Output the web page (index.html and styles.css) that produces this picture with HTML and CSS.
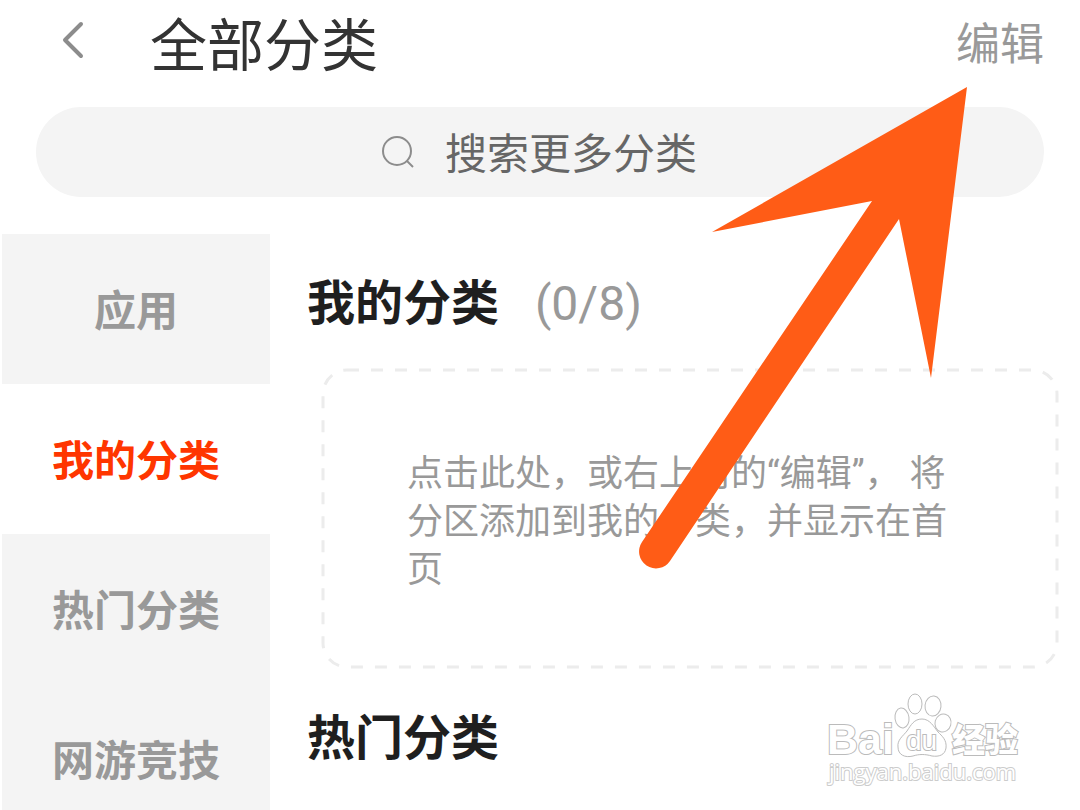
FILE: index.html
```html
<!DOCTYPE html>
<html lang="zh-CN">
<head>
  <meta charset="UTF-8" />
  <meta name="viewport" content="width=device-width, initial-scale=1.0" />
  <title>全部分类</title>
  <link rel="stylesheet" href="styles.css">
</head>
<body>
<div class="app">

  <header class="topbar">
    <button class="back" type="button" aria-label="返回">
      <svg width="24" height="40" viewBox="0 0 24 40"><path d="M21 4L5 20L21 36" /></svg>
    </button>
    <h1>全部分类</h1>
    <button class="edit" type="button">编辑</button>
  </header>

  <label class="search">
    <svg width="36" height="36" viewBox="0 0 36 36"><circle cx="16" cy="17" r="14" /><path d="M26 27L32 33" /></svg>
    <input type="text" placeholder="搜索更多分类" aria-label="搜索更多分类">
  </label>

  <div class="main">
    <nav class="sidebar">
      <a href="#app">应用</a>
      <a href="#mine" class="active">我的分类</a>
      <a href="#hot">热门分类</a>
      <a href="#games">网游竞技</a>
    </nav>

    <main class="content">
      <section id="mine">
        <h2>我的分类 <span class="count">(0/8)</span></h2>
        <div class="empty">
          <svg class="empty-border" aria-hidden="true"><rect x="2" y="2" rx="24" /></svg>
          <p>点击此处，或右上角的“编辑”， 将分区添加到我的分类，并显示在首页</p>
        </div>
      </section>
      <section id="hot">
        <h2>热门分类</h2>
      </section>
    </main>
  </div>

  <!-- arrow to the edit button -->
  <svg class="arrow" width="330" height="484" viewBox="0 0 330 484" aria-hidden="true">
    <path d="M328 1L73 146L233 115L3 456A16.6 16.6 0 0 0 31 475L260 133L292 292Z" />
  </svg>

  <svg class="watermark" width="200" height="100" viewBox="0 0 200 100" role="img" aria-label="Baidu 经验">
    <text class="wm-bai" x="3" y="62">Bai</text>
    <ellipse cx="78" cy="26" rx="7" ry="10" transform="rotate(-8 78 26)" />
    <ellipse cx="91" cy="12" rx="7" ry="10" />
    <ellipse cx="109" cy="14" rx="8" ry="10" transform="rotate(6 109 14)" />
    <ellipse cx="119" cy="31" rx="8" ry="9" transform="rotate(15 119 31)" />
    <path d="M98 27C106 27 110 35 114 40C118 44 123 48 122 56C121 63 115 65 108 64C101 62 95 62 89 64C81 66 74 63 74 55C73 48 79 44 83 39C87 33 90 27 98 27Z" />
    <text class="wm-du" x="82" y="58">du</text>
    <text class="wm-cn" x="128" y="60">经验</text>
    <text class="wm-url" x="5" y="88">jingyan.baidu.com</text>
  </svg>

</div>
</body>
</html>
```

FILE: styles.css
```css
:root { --grey-bg: #f4f4f4; --grey: #999; --dark: #1f1f1f; --red: #ff3600; --orange: #ff5c16; }
* { box-sizing: border-box; font-family: Roboto, "Noto Sans CJK SC", sans-serif; }
body { margin: 0; background: #fff; color: var(--dark); }
h1, h2, p { margin: 0; }
button { padding: 0; border: none; background: none; cursor: pointer; }
.app { position: relative; height: 100vh; overflow: hidden; }

.topbar { display: flex; align-items: flex-start; height: 88px; padding: 0 36px 0 60px; }
.back { display: flex; width: 90px; padding-top: 20px; }
.back svg { fill: none; stroke: #8c8c8c; stroke-width: 4; stroke-linecap: round; stroke-linejoin: round; }
h1 { flex: 1; font-size: 57px; line-height: 94px; font-weight: 400; color: #333; }
.edit { font-size: 44px; line-height: 90px; color: var(--grey); }

.search { display: flex; align-items: center; justify-content: center; gap: 28px; height: 90px; margin: 19px 36px 37px; border-radius: 45px; background: var(--grey-bg); }
.search svg { fill: none; stroke: #8c8c8c; stroke-width: 2; }
.search input { width: 254px; height: 90px; padding: 4px 0 0; border: none; outline: none; background: none; font-size: 42px; color: #666; }
.search input::placeholder { color: #666; opacity: 1; }

.main { display: flex; }
.sidebar { flex: 0 0 270px; padding-left: 2px; }
.sidebar a { display: block; height: 150px; font-size: 42px; line-height: 156px; font-weight: 700; text-align: center; text-decoration: none; color: var(--grey); background: var(--grey-bg); }
.sidebar a.active { color: var(--red); background: #fff; }

.content { flex: 1; padding: 0 21px 0 37px; }
h2 { height: 134px; font-size: 48px; line-height: 140px; font-weight: 700; }
.count { margin-left: 24px; font-weight: 400; color: var(--grey); }
.empty { position: relative; display: flex; align-items: center; min-height: 301px; margin-left: 14px; padding: 6px 96px 0 86px; }
.empty p { font-size: 36px; line-height: 48px; color: var(--grey); }
.empty-border { position: absolute; inset: 0; width: 100%; height: 100%; }
.empty-border rect { width: calc(100% - 4px); height: calc(100% - 4px); fill: none; stroke: #ececec; stroke-width: 3; stroke-dasharray: 12; }

.arrow { position: absolute; top: 86px; right: 111px; fill: var(--orange); pointer-events: none; }

.watermark { position: absolute; right: 56px; bottom: 18px; fill: #fff; stroke: #bbb; stroke-width: 1; pointer-events: none; }
.watermark text { paint-order: stroke; stroke-width: 2; }
.watermark .wm-bai { font: 700 43px "Liberation Sans", sans-serif; }
.watermark .wm-du { font: 400 28px "Liberation Sans", sans-serif; }
.watermark .wm-cn { font: 900 33px "Noto Sans CJK SC", sans-serif; }
.watermark .wm-url { font: 400 22px "Open Sans", sans-serif; stroke: #ccc; }
```
